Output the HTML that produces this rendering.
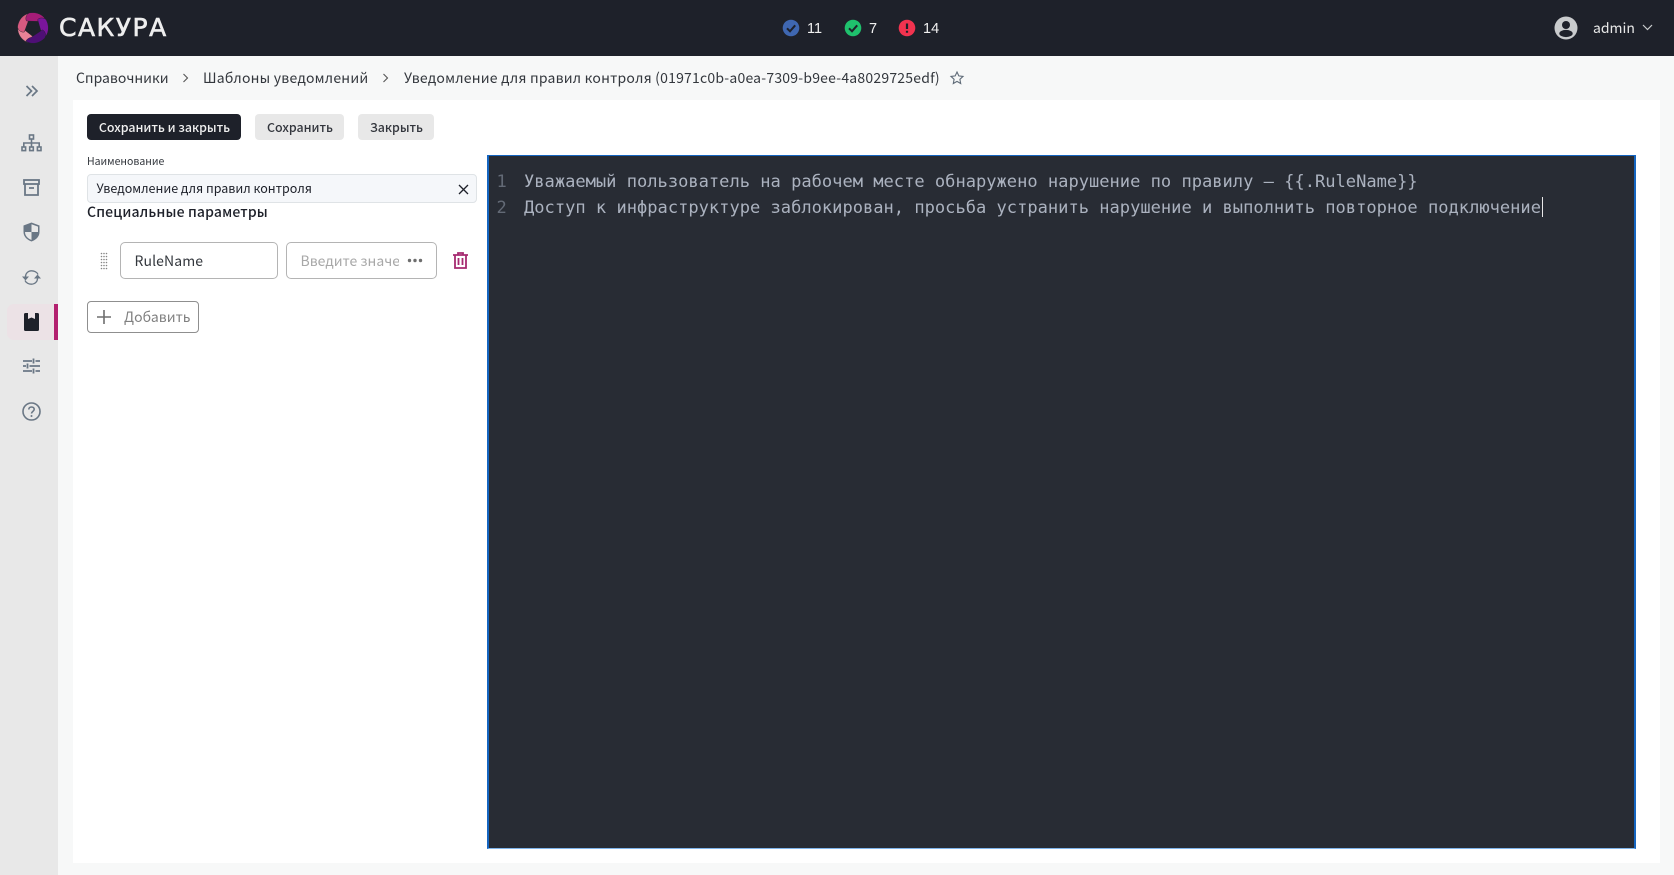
<!DOCTYPE html>
<html lang="ru">
<head>
<meta charset="utf-8">
<title>Сакура</title>
<style>
html,body{margin:0;padding:0;width:1674px;height:875px;overflow:hidden;background:#f7f8f8;font-family:"Noto Sans CJK SC","Liberation Sans",sans-serif;}
.a{position:absolute;white-space:nowrap;}
svg{position:absolute;overflow:visible;}
.btn{position:absolute;top:114px;height:26px;line-height:27px;text-align:center;border-radius:4px;font-size:12.4px;font-weight:500;background:#e8e8e8;color:#33363d;padding-left:1px;box-sizing:border-box;}
.bc{position:absolute;top:67px;line-height:22px;font-size:14px;color:#33373d;white-space:nowrap;}
.code{position:absolute;font-family:"DejaVu Sans Mono",monospace;font-size:17.07px;line-height:26px;white-space:pre;color:#abb2bf;}
.ln{color:#636a76;}
</style>
</head>
<body>
<div class="a" style="left:0;top:0;width:1674px;height:56px;background:#1e212a;"></div>
<svg style="left:33px;top:28px" width="1" height="1" viewBox="0 0 1 1">
<defs><path id="b" d="M-4 -15C4 -16.500 11 -13 13.500 -6.500C12 -5.500 9 -5.500 7 -6.500L-6.500 -7C-8 -9.500 -7 -13 -4 -15Z" stroke="#1e212a" stroke-width=".4"/></defs>
<use href="#b" fill="#e98297" transform="rotate(216)"/>
<use href="#b" fill="#d75a80" transform="rotate(288)"/>
<use href="#b" fill="#a51c77"/>
<use href="#b" fill="#7a159b" transform="rotate(72)"/>
<use href="#b" fill="#4e0f75" transform="rotate(144)"/>
</svg>
<div class="a" style="left:59px;top:12px;line-height:32px;font-family:'DejaVu Sans',sans-serif;font-size:25px;color:#eeeeee;letter-spacing:1.500px;-webkit-text-stroke:.6px #eeeeee;">САКУРА</div>

<svg style="left:782px;top:19px" width="18" height="18" viewBox="0 0 18 18"><circle cx="9" cy="9" r="8.300" fill="#3f67b1"/><path d="M5 9.300l3 3 5.200-6" fill="none" stroke="#1e212a" stroke-width="2"/></svg>
<div class="a" style="left:807px;top:18.500px;font:14.500px/20px 'Liberation Sans',sans-serif;color:#f0f0f0;">11</div>
<svg style="left:844px;top:19px" width="18" height="18" viewBox="0 0 18 18"><circle cx="9" cy="9" r="8.300" fill="#1fc16d"/><path d="M5 9.300l3 3 5.200-6" fill="none" stroke="#1e212a" stroke-width="2"/></svg>
<div class="a" style="left:869px;top:18.500px;font:14.500px/20px 'Liberation Sans',sans-serif;color:#f0f0f0;">7</div>
<svg style="left:898px;top:19px" width="18" height="18" viewBox="0 0 18 18"><circle cx="9" cy="9" r="8.300" fill="#f2334f"/><path d="M9 4.500v5.500M9 11.800v2" fill="none" stroke="#1e212a" stroke-width="2.200"/></svg>
<div class="a" style="left:923px;top:18.500px;font:14.500px/20px 'Liberation Sans',sans-serif;color:#f0f0f0;">14</div>

<svg style="left:1554px;top:16px" width="24" height="24" viewBox="0 0 24 24"><circle cx="12" cy="12" r="11.500" fill="#c9cbcd"/><circle cx="12" cy="9" r="4" fill="#1e212a"/><ellipse cx="12" cy="17.500" rx="6.700" ry="3.600" fill="#1e212a"/></svg>
<div class="a" style="left:1593px;top:17px;line-height:22px;font-size:14px;color:#e8e8e8;">admin</div>
<svg style="left:1642px;top:24px" width="11" height="7" viewBox="0 0 11 7"><path d="M1 1l4.500 4.500L10 1" fill="none" stroke="#c9cbcd" stroke-width="1.200"/></svg>

<div class="a" style="left:0;top:56px;width:58px;height:819px;background:#e8e8e8;"></div>
<div class="a" style="left:7px;top:304px;width:47px;height:36px;background:#ece2e6;border-radius:7px 0 0 7px;"></div>
<div class="a" style="left:54px;top:304px;width:4px;height:36px;background:#b3206f;"></div>

<svg style="left:25px;top:84px" width="14" height="14" viewBox="0 0 14 14"><path d="M1.500 2l5 5-5 5M7 2l5 5-5 5" fill="none" stroke="#6a7785" stroke-width="1.700"/></svg>
<svg style="left:21px;top:134px" width="21" height="18" viewBox="0 0 21 18"><g fill="none" stroke="#6a7785" stroke-width="1.600"><rect x="8.500" y="1" width="4" height="4"/><rect x="1" y="13" width="3.600" height="3.600"/><rect x="8.700" y="13" width="3.600" height="3.600"/><rect x="16.400" y="13" width="3.600" height="3.600"/><path d="M10.500 5v8M2.800 13v-4h15.400v4"/></g></svg>
<svg style="left:23px;top:179px" width="17" height="17" viewBox="0 0 17 17"><g fill="none" stroke="#6a7785" stroke-width="1.800"><rect x="1" y="1" width="15" height="4"/><path d="M2 5v11h13V5M6 9h5"/></g></svg>
<svg style="left:23px;top:222px" width="17" height="20" viewBox="0 0 17 20"><path d="M8.500 .5L16.500 3.500V10C16.500 15 12.500 18 8.500 19.500C4.500 18 .5 15 .5 10V3.500Z" fill="#6a7785"/><path d="M8.500 2.200L15 4.600V10H8.500ZM8.500 10V18C5 16.600 2 14 2 10Z" fill="#e8e8e8"/></svg>
<svg style="left:22px;top:270px" width="19" height="15" viewBox="0 0 19 15"><g fill="none" stroke="#6a7785" stroke-width="1.300"><path d="M16 4.500C15 2 12 .8 9.500 .8C6 .8 3.500 3.500 3.500 6.500"/><path d="M3 10.500C4 13 7 14.200 9.500 14.200C13 14.200 15.500 11.500 15.500 8.500"/></g><path d="M0 6.500H7L3.500 10.500ZM12 8.500H19L15.500 4.500Z" fill="#6a7785"/></svg>
<svg style="left:24px;top:313px" width="15" height="18" viewBox="0 0 15 18"><path d="M1.500 0H4V6L7.500 4.500L11 6V0H13.500A1.500 1.500 0 0 1 15 1.500V16.500A1.500 1.500 0 0 1 13.500 18H1.500A1.500 1.500 0 0 1 0 16.500V1.500A1.500 1.500 0 0 1 1.500 0Z" fill="#1e212a"/></svg>
<svg style="left:23px;top:358px" width="17" height="16" viewBox="0 0 17 16"><g stroke="#6a7785" stroke-width="1.800" fill="none"><path d="M0 3h9M12.500 3H17M10.500 .5v5M0 8h3M6.500 8H17M4.500 5.500v5M0 13h9M12.500 13H17M10.500 10.500v5"/></g></svg>
<svg style="left:22px;top:402px" width="19" height="19" viewBox="0 0 19 19"><circle cx="9.500" cy="9.500" r="8.500" fill="none" stroke="#6a7785" stroke-width="1.600"/><path d="M6.800 7.500C6.800 5.900 8 5 9.500 5c1.600 0 2.700 1 2.700 2.300 0 2.200-2.700 2.200-2.700 4.200" fill="none" stroke="#6a7785" stroke-width="1.600"/><circle cx="9.500" cy="14" r="1" fill="#6a7785"/></svg>

<div class="bc" style="left:76px;">Справочники</div>
<svg style="left:182px;top:73px" width="8" height="10" viewBox="0 0 8 10"><path d="M1.500 1l4 4-4 4" fill="none" stroke="#555" stroke-width="1.100"/></svg>
<div class="bc" style="left:203px;letter-spacing:.22px;">Шаблоны уведомлений</div>
<svg style="left:382px;top:73px" width="8" height="10" viewBox="0 0 8 10"><path d="M1.500 1l4 4-4 4" fill="none" stroke="#555" stroke-width="1.100"/></svg>
<div class="bc" style="left:404px;letter-spacing:.21px;">Уведомление для правил контроля (01971c0b-a0ea-7309-b9ee-4a8029725edf)</div>
<svg style="left:950px;top:71px" width="14" height="14" viewBox="0 0 14 14"><path d="M7 1l1.800 3.900 4.200.5-3.100 2.900.8 4.200L7 10.400 3.300 12.500l.8-4.200L1 5.400l4.200-.5Z" fill="none" stroke="#5f6b78" stroke-width="1.100"/></svg>

<div class="a" style="left:73px;top:100px;width:1587px;height:763px;background:#fff;"></div>

<div class="btn" style="left:87px;width:154px;background:#1e212a;color:#f0f0f0;">Сохранить и закрыть</div>
<div class="btn" style="left:255px;width:89px;">Сохранить</div>
<div class="btn" style="left:358px;width:76px;">Закрыть</div>

<div class="a" style="left:87px;top:152.500px;line-height:18px;font-size:10.500px;color:#33373d;">Наименование</div>
<div class="a" style="left:87px;top:174px;width:388px;height:27px;background:#f5f7fa;border:1px solid #dfe3e6;border-radius:4px;"></div>
<div class="a" style="left:96.500px;top:178px;line-height:20px;font-size:12.500px;color:#1e212a;">Уведомление для правил контроля</div>
<svg style="left:458px;top:184px" width="11" height="11" viewBox="0 0 11 11"><path d="M1 1l9 9M10 1l-9 9" stroke="#1e212a" stroke-width="1.300"/></svg>
<div class="a" style="left:87px;top:202px;line-height:20px;font-size:14px;font-weight:500;letter-spacing:.15px;color:#1e212a;">Специальные параметры</div>

<svg style="left:100px;top:252px" width="8" height="18" viewBox="0 0 8 18"><g fill="#858585"><circle cx="1.500" cy="1.500" r=".8"/><circle cx="4" cy="1.500" r=".8"/><circle cx="6.500" cy="1.500" r=".8"/><circle cx="1.500" cy="4.500" r=".8"/><circle cx="4" cy="4.500" r=".8"/><circle cx="6.500" cy="4.500" r=".8"/><circle cx="1.500" cy="7.500" r=".8"/><circle cx="4" cy="7.500" r=".8"/><circle cx="6.500" cy="7.500" r=".8"/><circle cx="1.500" cy="10.500" r=".8"/><circle cx="4" cy="10.500" r=".8"/><circle cx="6.500" cy="10.500" r=".8"/><circle cx="1.500" cy="13.500" r=".8"/><circle cx="4" cy="13.500" r=".8"/><circle cx="6.500" cy="13.500" r=".8"/><circle cx="1.500" cy="16.500" r=".8"/><circle cx="4" cy="16.500" r=".8"/><circle cx="6.500" cy="16.500" r=".8"/></g></svg>
<div class="a" style="left:120px;top:242px;width:156px;height:35px;border:1px solid #b4b4b4;border-radius:5px;"></div>
<div class="a" style="left:134.500px;top:250.500px;line-height:20px;font-size:14px;letter-spacing:.1px;color:#33373d;">RuleName</div>
<div class="a" style="left:286px;top:242px;width:149px;height:35px;border:1px solid #b4b4b4;border-radius:5px;"></div>
<div class="a" style="left:300.500px;top:250.500px;width:98px;overflow:hidden;line-height:20px;font-size:14px;color:#a8a8a8;">Введите значение</div>
<svg style="left:407px;top:258px" width="16" height="5" viewBox="0 0 16 5"><g fill="#6e6e6e"><circle cx="2.500" cy="2.500" r="1.700"/><circle cx="8" cy="2.500" r="1.700"/><circle cx="13.500" cy="2.500" r="1.700"/></g></svg>
<svg style="left:453px;top:252px" width="15" height="17" viewBox="0 0 15 17"><g fill="none" stroke="#a62a70" stroke-width="1.800"><path d="M0 3h15M5 3V1h5v2M2 3v13h11V3M5.500 6v7M9.500 6v7"/></g></svg>

<div class="a" style="left:87px;top:301px;width:110px;height:30px;border:1px solid #8f8f8f;border-radius:4px;"></div>
<svg style="left:97px;top:310px" width="14" height="14" viewBox="0 0 14 14"><path d="M7 0v14M0 7h14" stroke="#6e6e6e" stroke-width="1.600"/></svg>
<div class="a" style="left:124px;top:307px;line-height:20px;font-size:14px;color:#808080;">Добавить</div>

<div class="a" style="left:487px;top:155px;width:1145px;height:692px;background:#282c34;border:solid #1565c0;border-width:1px 2px 1px 2px;border-bottom-color:#7fb5ec;"></div>
<div class="code ln" style="left:496.500px;top:169px;">1</div>
<div class="code ln" style="left:496.500px;top:195px;">2</div>
<div class="code" style="left:524px;top:169px;">Уважаемый пользователь на рабочем месте обнаружено нарушение по правилу – {{.RuleName}}</div>
<div class="code" style="left:524px;top:195px;">Доступ к инфраструктуре заблокирован, просьба устранить нарушение и выполнить повторное подключение</div>
<div class="a" style="left:1541.500px;top:197px;width:1px;height:20px;background:#e8e8e8;"></div>
</body>
</html>
